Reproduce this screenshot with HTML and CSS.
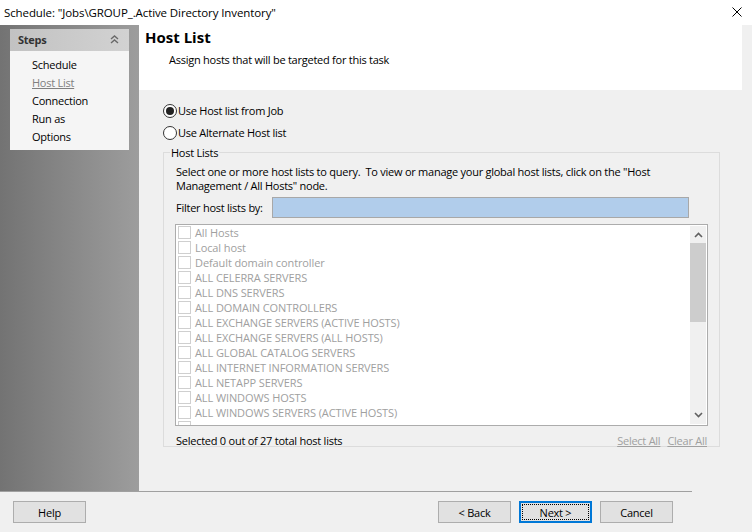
FILE: index.html
```html
<!DOCTYPE html>
<html>
<head>
<meta charset="utf-8">
<link rel="stylesheet" href="styles.css">
</head>
<body>
<div class="window">
  <div class="titlebar">
    <span class="title">Schedule: "Jobs\GROUP_.Active Directory Inventory"</span>
    <svg class="close" width="10" height="10" viewBox="0 0 10 10"><path d="M0.5 0.5 L9.5 9.5 M9.5 0.5 L0.5 9.5" stroke="#000" stroke-width="1" fill="none"/></svg>
  </div>
  <div class="main">
    <div class="sidebar">
      <div class="steps">
        <div class="steps-head">
          <span>Steps</span>
          <svg width="9" height="9" viewBox="0 0 9 9"><path d="M1 4 L4.5 1 L8 4 M1 8 L4.5 5 L8 8" stroke="#6a6a6a" stroke-width="1.4" fill="none"/></svg>
        </div>
        <ul class="steps-list">
          <li>Schedule</li>
          <li class="current">Host List</li>
          <li>Connection</li>
          <li>Run as</li>
          <li>Options</li>
        </ul>
      </div>
    </div>
    <div class="content">
      <div class="header">
        <div class="h-title">Host List</div>
        <div class="h-sub">Assign hosts that will be targeted for this task</div>
      </div>
      <div class="body">
        <label class="radio"><span class="circle checked"></span>Use Host list from Job</label>
        <label class="radio"><span class="circle"></span>Use Alternate Host list</label>
        <fieldset class="group">
          <legend>Host Lists</legend>
          <p class="desc">Select one or more host lists to query.&nbsp; To view or manage your global host lists, click on the "Host Management / All Hosts" node.</p>
          <div class="filter">
            <span>Filter host lists by:</span>
            <div class="input"></div>
          </div>
          <div class="listbox">
            <div class="items">
              <div class="item"><span class="cb"></span>All Hosts</div>
              <div class="item"><span class="cb"></span>Local host</div>
              <div class="item"><span class="cb"></span>Default domain controller</div>
              <div class="item"><span class="cb"></span>ALL CELERRA SERVERS</div>
              <div class="item"><span class="cb"></span>ALL DNS SERVERS</div>
              <div class="item"><span class="cb"></span>ALL DOMAIN CONTROLLERS</div>
              <div class="item"><span class="cb"></span>ALL EXCHANGE SERVERS (ACTIVE HOSTS)</div>
              <div class="item"><span class="cb"></span>ALL EXCHANGE SERVERS (ALL HOSTS)</div>
              <div class="item"><span class="cb"></span>ALL GLOBAL CATALOG SERVERS</div>
              <div class="item"><span class="cb"></span>ALL INTERNET INFORMATION SERVERS</div>
              <div class="item"><span class="cb"></span>ALL NETAPP SERVERS</div>
              <div class="item"><span class="cb"></span>ALL WINDOWS HOSTS</div>
              <div class="item"><span class="cb"></span>ALL WINDOWS SERVERS (ACTIVE HOSTS)</div>
              <div class="item"><span class="cb"></span></div>
            </div>
            <div class="scrollbar">
              <svg class="arrow" width="9" height="6" viewBox="0 0 9 6"><path d="M1 5 L4.5 1.5 L8 5" stroke="#606060" stroke-width="1.6" fill="none"/></svg>
              <div class="track"><div class="thumb"></div></div>
              <svg class="arrow" width="9" height="6" viewBox="0 0 9 6"><path d="M1 1 L4.5 4.5 L8 1" stroke="#606060" stroke-width="1.6" fill="none"/></svg>
            </div>
          </div>
          <div class="status">
            <span>Selected 0 out of 27 total host lists</span>
            <span class="links"><span class="link">Select All</span><span class="link">Clear All</span></span>
          </div>
        </fieldset>
      </div>
    </div>
  </div>
  <div class="separator"></div>
  <div class="footer">
    <button class="btn">Help</button>
    <div class="nav">
      <button class="btn">&lt; Back</button>
      <button class="btn default"><span class="focus">Next &gt;</span></button>
      <button class="btn">Cancel</button>
    </div>
  </div>
</div>
</body>
</html>
```

FILE: styles.css
```css
* { box-sizing: border-box; }
html, body { margin: 0; padding: 0; }
body {
  width: 752px;
  height: 532px;
  overflow: hidden;
  background: #f0f0f0;
  font-family: "Open Sans", "Noto Sans", sans-serif;
  font-size: 11px;
  letter-spacing: -0.25px;
  color: #000;
}
.window { width: 752px; height: 532px; display: flex; flex-direction: column; }
.titlebar {
  height: 25px;
  background: #fff;
  display: flex;
  align-items: center;
  justify-content: space-between;
  padding: 0 10px 1px 4px;
}
.title { font-size: 11.5px; letter-spacing: -0.1px; }
.main { height: 466px; display: flex; }
.sidebar {
  width: 139px;
  background: linear-gradient(to right, #737373, #9d9d9d);
  padding: 4px 10px 0 10px;
}
.steps { background: #f5f5f5; }
.steps-head {
  height: 22px;
  background: linear-gradient(to right, #c2c2c2, #d2d2d2);
  display: flex;
  align-items: center;
  justify-content: space-between;
  padding: 0 10px 1px 8px;
  font-weight: bold;
  color: #333;
}
.steps-list { list-style: none; margin: 0; padding: 5px 0 4px 22px; }
.steps-list li { height: 18px; line-height: 18px; }
.steps-list li.current { color: #808080; text-decoration: underline; }
.content { flex: 1; display: flex; flex-direction: column; }
.header {
  background: #fff;
  height: 65px;
  margin-right: 10px;
  padding: 1px 0 0 6px;
}
.h-title { font-size: 15px; font-weight: bold; line-height: 22px; letter-spacing: 0; }
.h-sub { padding-left: 24px; margin-top: 4px; }
.body { padding: 10px 0 0 24px; flex: 1; }
.radio { display: flex; align-items: center; height: 22px; line-height: 14px; }
.circle {
  width: 14px; height: 14px;
  border: 1px solid #333;
  border-radius: 50%;
  margin-right: 1px;
  display: flex; align-items: center; justify-content: center;
  background: #fff;
}
.circle.checked::after {
  content: ""; width: 8px; height: 8px; border-radius: 50%; background: #222;
}
.group {
  margin: 0;
  margin-top: 1px;
  width: 557px;
  height: 302px;
  border: 1px solid #dcdcdc;
  padding: 3px 11px 0 12px;
}
.group legend { padding: 0 1px; margin-left: -6px; }
.desc { margin: 2px 0 0 0; line-height: 14px; }
.filter { display: flex; align-items: center; margin-top: 4px; }
.filter span { width: 96px; }
.input {
  width: 417px; height: 21px;
  background: #b1cdeb;
  border: 1px solid #a8a8a8;
}
.listbox {
  margin-top: 6px;
  margin-left: -1px;
  width: 533px; height: 202px;
  border: 1px solid #acacac;
  background: #fff;
  display: flex;
  overflow: hidden;
}
.items { flex: 1; padding: 0 0 0 2px; color: #a0a0a0; letter-spacing: -0.1px; }
.item { height: 15px; display: flex; align-items: center; white-space: nowrap; }
.cb {
  width: 13px; height: 13px;
  border: 1px solid #cfcfcf;
  background: #fff;
  margin-right: 4px;
  flex: none;
}
.scrollbar {
  width: 16px;
  margin: 1px 1px 1px 0;
  background: #f0f0f0;
  display: flex;
  flex-direction: column;
  align-items: center;
}
.arrow { margin: 6px 0 5px; flex: none; }
.scrollbar .arrow:last-child { margin: 5px 0 6px; }
.track { flex: 1; width: 100%; }
.thumb { width: 100%; height: 79px; background: #cdcdcd; margin-top: 0; }
.status {
  display: flex; justify-content: space-between;
  margin-top: 7px;
  padding-right: 1px;
}
.links { display: flex; gap: 7px; color: #a0a0a0; }
.link { text-decoration: underline; }
.separator { height: 1px; width: 692px; background: #a0a0a0; }
.footer {
  flex: 1;
  display: flex;
  justify-content: space-between;
  padding: 9px 79px 0 13px;
}
.nav { display: flex; gap: 8px; }
.btn {
  width: 73px; height: 22px;
  background: #e1e1e1;
  border: 1px solid #adadad;
  font-family: inherit;
  font-size: 11px;
  letter-spacing: -0.25px;
  color: #000;
  padding: 0;
  margin: 0;
}
.btn.default { border: 2px solid #0078d7; display: flex; align-items: center; justify-content: center; }
.focus { border: 1px dotted #000; width: 67px; height: 16px; display: flex; align-items: center; justify-content: center; }
```
